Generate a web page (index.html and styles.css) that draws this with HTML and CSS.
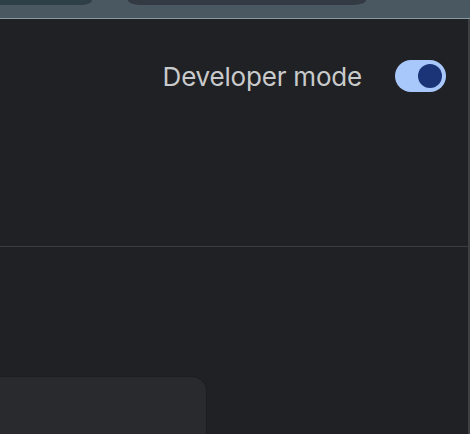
FILE: index.html
```html
<!DOCTYPE html>
<html>
<head>
<meta charset="utf-8">
<link rel="stylesheet" href="styles.css">
</head>
<body>
<div class="window">
  <div class="chrome">
    <div class="tab tab-left"></div>
    <div class="tab tab-mid"></div>
  </div>
  <div class="page">
    <header class="toolbar">
      <div class="dev">
        <span class="dev-label">Developer mode</span>
        <span class="toggle" role="switch" aria-checked="true"><span class="knob"></span></span>
      </div>
    </header>
    <main class="content">
      <div class="card"></div>
    </main>
  </div>
</div>
</body>
</html>
```
FILE: styles.css
```css
html, body {
  margin: 0;
  padding: 0;
  width: 470px;
  height: 434px;
  overflow: hidden;
  background: #202124;
  font-family: Inter, Roboto, "Noto Sans", "Liberation Sans", sans-serif;
}
.window {
  width: 470px;
  height: 434px;
  display: flex;
  flex-direction: column;
}
.chrome {
  height: 18px;
  background: #4a5961;
  border-bottom: 1px solid #8a99a0;
  position: relative;
  flex: none;
}
.tab {
  position: absolute;
  top: 0;
  height: 5px;
}
.tab-left {
  left: 0;
  width: 92px;
  background: #2f3f47;
  border-bottom-right-radius: 10px 5px;
}
.tab-mid {
  left: 128px;
  width: 238px;
  background: #343a43;
  border-bottom-left-radius: 12px 5px;
  border-bottom-right-radius: 12px 5px;
}
.page {
  flex: 1;
  display: flex;
  flex-direction: column;
  border-right: 2px solid #3f4043;
}
.toolbar {
  height: 227px;
  border-bottom: 1px solid #3c3d40;
  flex: none;
}
.dev {
  display: flex;
  justify-content: flex-end;
  align-items: center;
  gap: 33px;
  padding: 41px 22px 0 0;
}
.dev-label {
  color: #c9cacb;
  font-size: 26px;
  letter-spacing: -0.2px;
}
.toggle {
  width: 51px;
  height: 32px;
  border-radius: 16px;
  background: #a8c7fa;
  display: flex;
  align-items: center;
  justify-content: flex-end;
  padding-right: 4px;
  box-sizing: border-box;
}
.knob {
  width: 24px;
  height: 24px;
  border-radius: 50%;
  background: #1b3478;
}
.content {
  flex: 1;
  padding-top: 130px;
}
.card {
  width: 206px;
  height: 60px;
  background: #292a2d;
  border-top-right-radius: 14px;
  box-shadow: 0 0 0 1px #1c1d1f;
}
```
